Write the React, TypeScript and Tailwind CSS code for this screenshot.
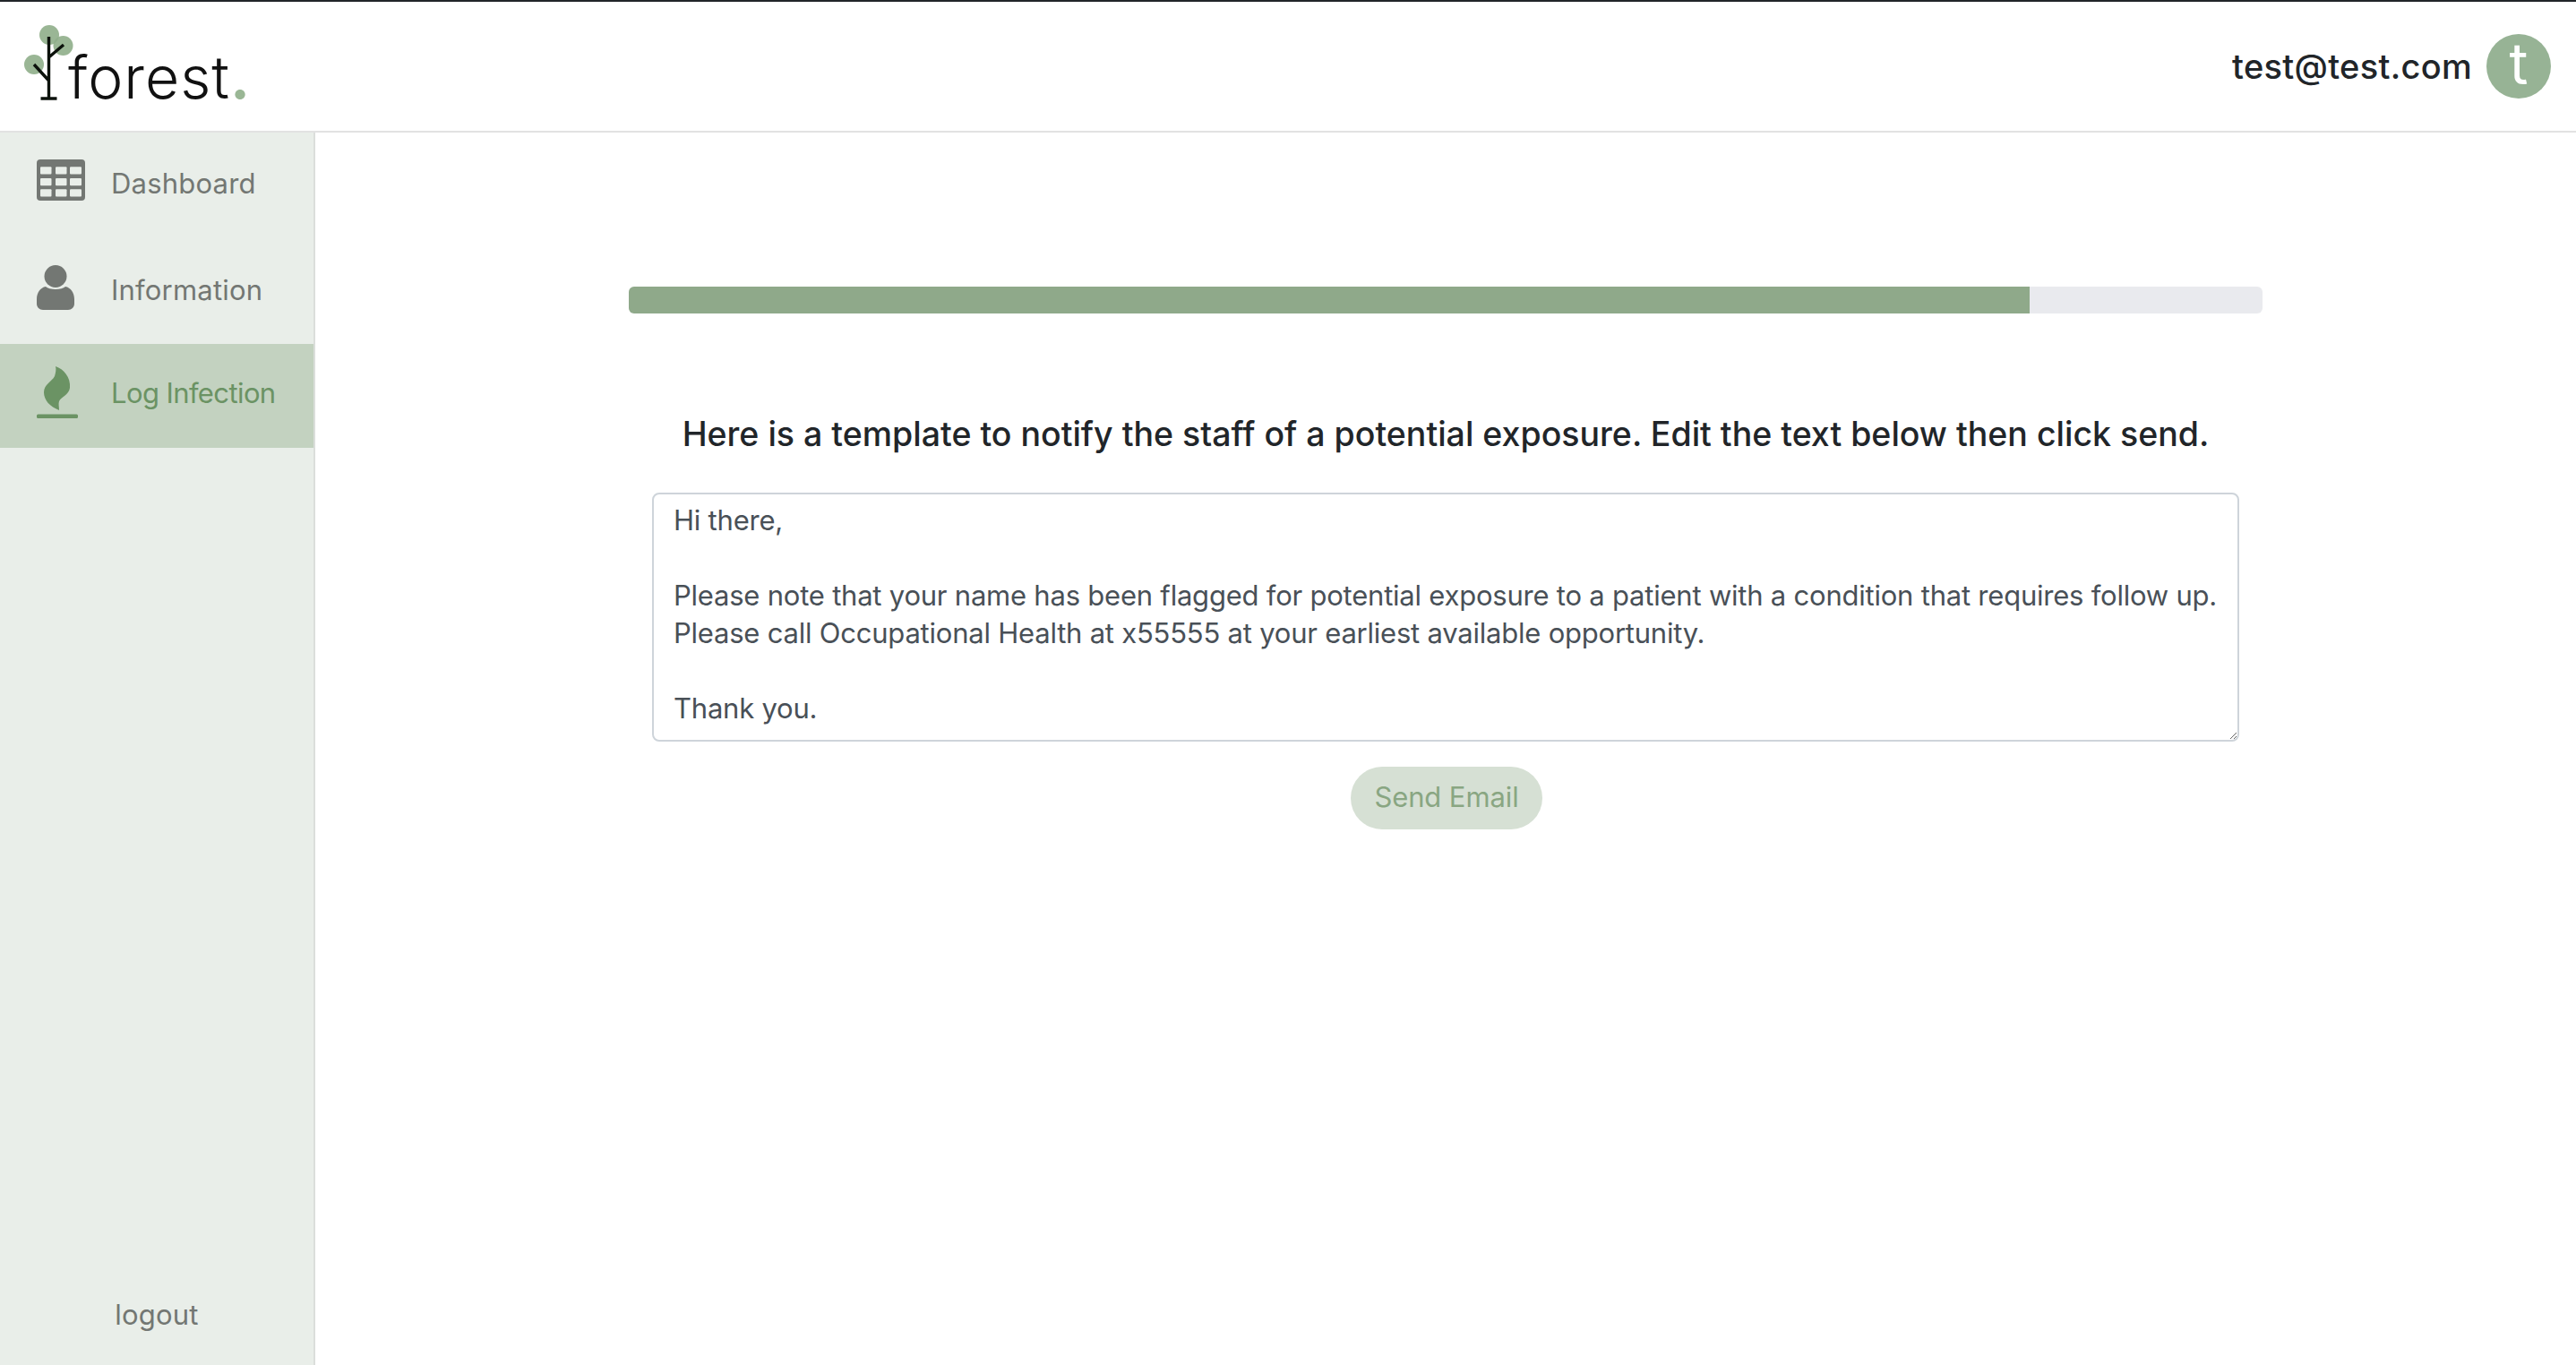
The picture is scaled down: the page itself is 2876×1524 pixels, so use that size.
import React from "react";

const font = { fontFamily: "Inter, 'Noto Sans', sans-serif" };

function TableIcon() {
  return (
    <svg width="54" height="46" viewBox="0 0 54 46" className="block">
      <rect width="54" height="46" rx="4" fill="#737773" />
      {[8.3, 21, 33.3].map((y, r) => [4, 21, 37].map((x, c) => (
        <rect key={`${r}-${c}`} x={x} y={y} width={c === 2 ? 13 : 12.5} height="8.3" rx="1" fill="#e9eee9" />
      )))}
    </svg>
  );
}

function PersonIcon() {
  return (
    <svg width="42" height="50" viewBox="0 0 42 50" className="block">
      <circle cx="21" cy="12.5" r="12.5" fill="#737773" />
      <path d="M10 24 C14 28 28 28 32 24 C38 25 42 31 42 38 V43 C42 47 39 50 35 50 H7 C3 50 0 47 0 43 V38 C0 31 4 25 10 24 Z" fill="#737773" />
    </svg>
  );
}

function FlameIcon() {
  return (
    <svg width="46" height="58" viewBox="0 0 46 58" className="block">
      <path d="M21 0 C30 3 38 12 37 24 C36 32 27 34 25 39 C24 42 25 45 25 49 C15 45 8 38 8 29 C8 20 17 17 20 11 C21 7 22 4 21 0 Z" fill="#6b9364" />
      <rect x="0" y="53.5" width="46" height="4.5" rx="1.5" fill="#6b9364" />
    </svg>
  );
}

function TreeLogo() {
  return (
    <svg width="56" height="86" viewBox="0 0 56 86" className="block shrink-0">
      <circle cx="28" cy="11" r="11" fill="#8fae8a" opacity="0.9" />
      <circle cx="43.5" cy="23" r="11" fill="#8fae8a" opacity="0.9" />
      <circle cx="11" cy="44" r="11" fill="#8fae8a" opacity="0.9" />
      <path d="M27.5 13 V82 M18.5 82 H36.5 M27.5 36 L44 22 M27.5 62 L11 44" stroke="#0c120c" strokeWidth="3.4" fill="none" />
    </svg>
  );
}

function NavItem({ icon, label, row, iconBox, text }: { icon: React.ReactNode; label: string; row: string; iconBox: string; text: string }) {
  return (
    <div className={`flex items-center pl-[41px] ${row}`}>
      <div className={`w-[83px] shrink-0 ${iconBox}`}>{icon}</div>
      <span className={`text-[31px] leading-none ${text}`}>{label}</span>
    </div>
  );
}

const body = `Hi there,

Please note that your name has been flagged for potential exposure to a patient with a condition that requires follow up.
Please call Occupational Health at x55555 at your earliest available opportunity.

Thank you.`;

export default function App() {
  return (
    <div className="flex flex-col w-[2876px] h-[1524px] bg-white overflow-hidden" style={font}>
      <header className="flex items-center justify-between h-[148px] shrink-0 border-t-2 border-b-2 border-t-[#212529] border-b-[#e2e2e2] pl-[27px] pr-[28px]">
        <div className="flex items-end self-start mt-[26px]">
          <TreeLogo />
          <span className="text-[66px] font-light leading-[66px] text-[#111] tracking-[1px] -ml-[7px] -mb-[5px]">
            forest<span className="text-[#9ab795] font-bold">.</span>
          </span>
        </div>
        <div className="flex items-center gap-[16px]">
          <span className="text-[38px] font-medium text-[#212529] tracking-[0.3px]">test@test.com</span>
          <div className="flex items-center justify-center w-[72px] h-[72px] rounded-full bg-[#97b395] text-white text-[64px] leading-none pb-[6px]">t</div>
        </div>
      </header>
      <div className="flex flex-1 min-h-0">
        <aside className="flex flex-col w-[352px] shrink-0 bg-[#e9eee9] border-r-2 border-r-[#dbdedb]">
          <NavItem row="h-[118px] pb-[6px]" iconBox="mb-[6px]" text="text-[#737773] tracking-[0.2px]" icon={<TableIcon />} label="Dashboard" />
          <NavItem row="h-[118px] pb-[4px]" iconBox="mb-[4px]" text="text-[#737773] tracking-[0.2px]" icon={<PersonIcon />} label="Information" />
          <NavItem row="h-[116px] pb-[8px] bg-[#c3d2c0]" iconBox="" text="text-[#6b9364] -tracking-[0.6px]" icon={<FlameIcon />} label="Log Infection" />
          <div className="mt-auto pb-[41px] text-center text-[31px] leading-none tracking-[0.2px] text-[#737773]">logout</div>
        </aside>
        <main className="flex-1 flex flex-col items-center pt-[172px]">
          <div className="w-[1824px] h-[30px] rounded-[6px] bg-[#e9eaee] overflow-hidden">
            <div className="h-full w-[1564px] bg-[#8fa98a]" />
          </div>
          <h1 className="mt-[112px] text-[37.5px] leading-[46px] font-medium text-[#212529] whitespace-nowrap">
            Here is a template to notify the staff of a potential exposure. Edit the text below then click send.
          </h1>
          <textarea
            readOnly
            value={body}
            className="mt-[42px] block w-[1772px] h-[278px] px-[22px] py-[8px] bg-white border-2 border-[#ced4da] rounded-[8px] text-[31px] leading-[42px] -tracking-[0.22px] text-[#495057] outline-none whitespace-pre"
            style={font}
          />
          <button className="mt-[28px] ml-[2px] w-[214px] h-[70px] pb-[3px] rounded-full bg-[#d6e0d4] text-[#89a682] text-[31px] leading-none -tracking-[0.1px]">Send Email</button>
        </main>
      </div>
    </div>
  );
}
